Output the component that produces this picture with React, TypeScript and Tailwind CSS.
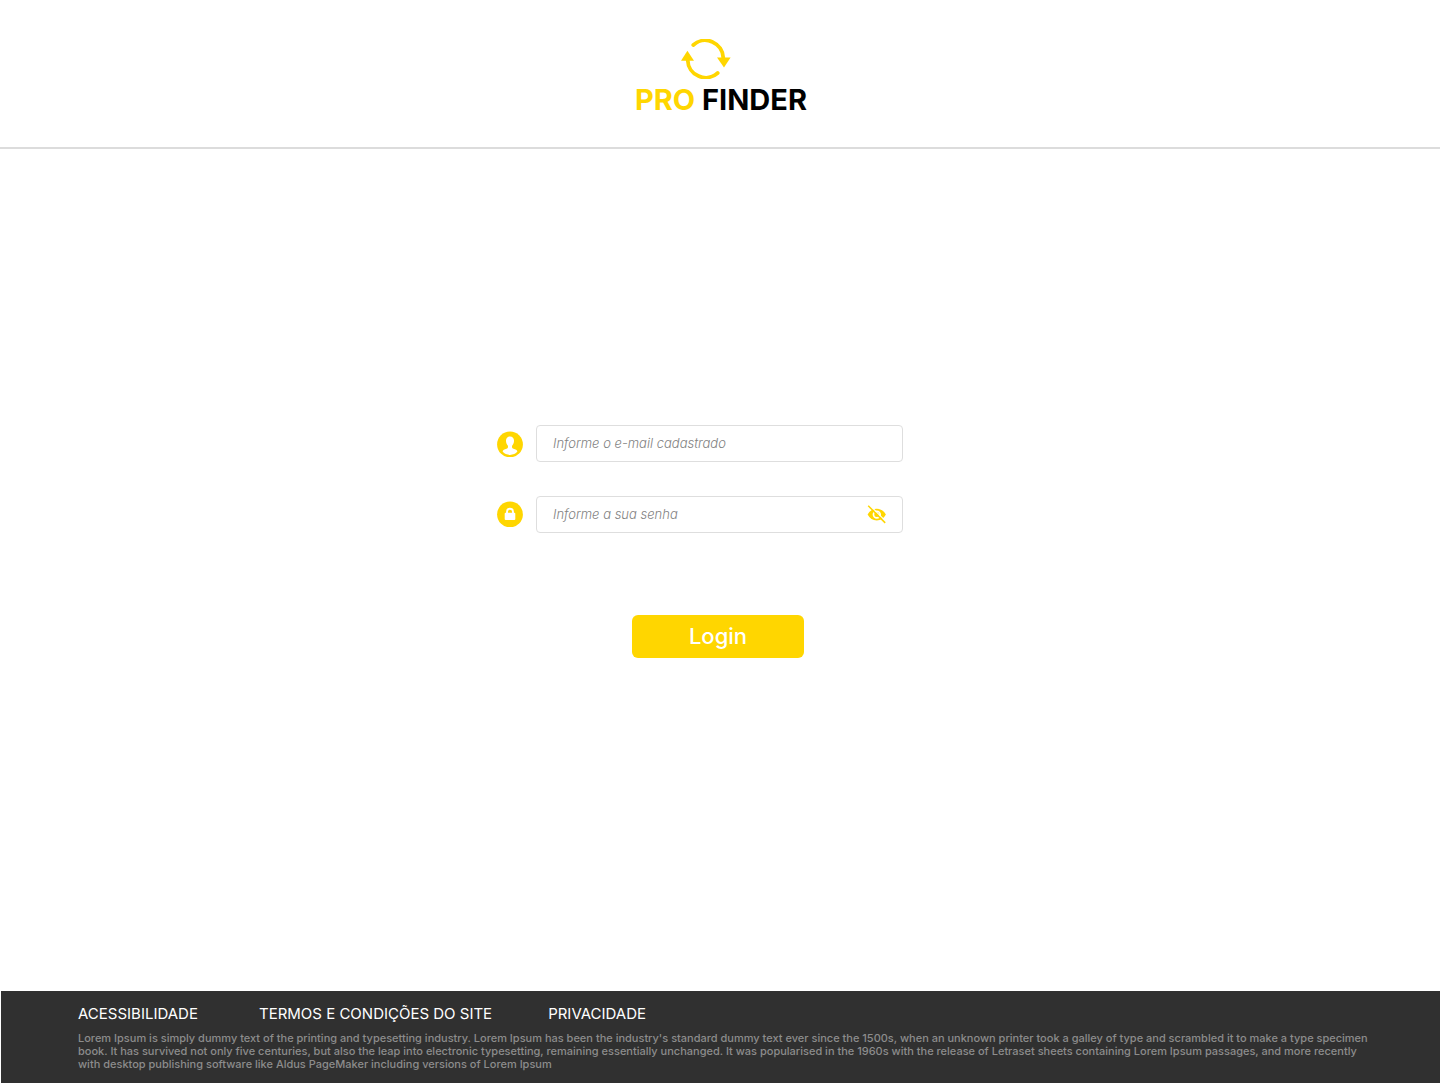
import { useState } from 'react';

function CycleMark() {
  return (
    <svg className="h-10 w-[50px]" viewBox="0 0 50 40" fill="none" aria-hidden="true">
      <path d="M12.300 6A18 18 0 0 1 42.300 19" stroke="#ffd600" strokeWidth="3.800" strokeLinecap="round" />
      <path d="M36.700 34A18 18 0 0 1 6.700 21" stroke="#ffd600" strokeWidth="3.800" strokeLinecap="round" />
      <path d="M36 18.400H49.600L43 28.400Z" fill="#ffd600" />
      <path d="M0 21.800H13L6.400 11.800Z" fill="#ffd600" />
    </svg>
  );
}

function UserIcon() {
  return (
    <svg className="size-[26px]" viewBox="0 0 26 26" aria-hidden="true">
      <circle cx="13" cy="13.400" r="12.900" fill="#ffd600" />
      <path
        d="M13 5.6c2.7 0 4.200 1.900 4 4.500-.1 2-.9 3.700-1.900 4.700-.3 1.500.1 2.400 1.400 2.900 2 .7 3.700 1.200 3.900 2.900C18.800 22.700 16 23.900 13 23.900S7.200 22.700 5.600 20.600c.2-1.700 1.900-2.200 3.900-2.900 1.300-.5 1.700-1.400 1.400-2.900-1-1-1.800-2.700-1.900-4.700-.2-2.600 1.300-4.500 4-4.500Z"
        fill="#fff"
      />
    </svg>
  );
}

function LockIcon() {
  return (
    <svg className="size-[26px]" viewBox="0 0 26 26" aria-hidden="true">
      <circle cx="13" cy="13.400" r="12.900" fill="#ffd600" />
      <rect x="7.700" y="11.700" width="10.600" height="7.400" rx="1" fill="#fff" />
      <path d="M10 12.400v-1.700a3 3 0 0 1 6 0v1.700" fill="none" stroke="#fff" strokeWidth="1.900" />
    </svg>
  );
}

function EyeOffIcon() {
  return (
    <svg className="h-5 w-5" viewBox="0 0 20 20" fill="none" aria-hidden="true">
      <path
        fillRule="evenodd"
        d="M.6 10.600C2.600 6.800 5.900 4.700 9.800 4.700s7.100 2.100 9.100 5.900c-2 3.800-5.200 5.900-9.100 5.900S2.600 14.400.6 10.600Zm9.200-4.200a4.200 4.200 0 1 0 0 8.400 4.200 4.200 0 0 0 0-8.400Zm0 1.700a2.500 2.500 0 1 1 0 5 2.500 2.500 0 0 1 0-5Z"
        fill="#ffd600"
      />
      <path d="M2.700 1.200L19.300 17.800" stroke="#fff" strokeWidth="1.200" />
      <path d="M1.200 1.700L18.200 18.900" stroke="#ffd600" strokeWidth="1.500" />
    </svg>
  );
}

const inputClass =
  'h-[37px] w-full rounded border border-[#dedede] bg-white px-4 text-[13px] text-gray-800 outline-none placeholder:font-light placeholder:italic placeholder:text-[#828282] focus:border-[#ffd600]';

export default function App() {
  const [visible, setVisible] = useState(false);

  return (
    <div className="flex min-h-screen flex-col bg-white font-['Inter',sans-serif]">
      <header className="flex flex-col items-center border-b-2 border-[#dcdcdc] pt-[39px] pb-[26px]">
        <div className="mr-7">
          <CycleMark />
        </div>
        <h1 className="ml-0.5 text-[29px] leading-[42px] font-bold text-black">
          <span className="text-[#ffd600]">PRO</span> FINDER
        </h1>
      </header>

      <main className="flex flex-1 flex-col items-center justify-center px-4 pb-[58px]">
        <form className="flex w-full max-w-[446px] flex-col sm:pr-10" onSubmit={(e) => e.preventDefault()}>
          <div className="flex items-center gap-[13px]">
            <label htmlFor="email" aria-label="E-mail" className="mt-0.5 shrink-0">
              <UserIcon />
            </label>
            <input id="email" type="email" placeholder="Informe o e-mail cadastrado" className={inputClass} />
          </div>

          <div className="mt-[34px] flex items-center gap-[13px]">
            <label htmlFor="password" aria-label="Senha" className="shrink-0">
              <LockIcon />
            </label>
            <div className="relative flex-1">
              <input
                id="password"
                type={visible ? 'text' : 'password'}
                placeholder="Informe a sua senha"
                className={inputClass}
              />
              <button
                type="button"
                aria-label="Mostrar senha"
                onClick={() => setVisible(!visible)}
                className="absolute inset-y-0 right-4 flex cursor-pointer items-center"
              >
                <EyeOffIcon />
              </button>
            </div>
          </div>

          <button
            type="submit"
            className="mt-[82px] h-[43px] w-[172px] cursor-pointer self-center rounded-md bg-[#ffd600] text-[22px] font-medium text-white sm:ml-9"
          >
            Login
          </button>
        </form>
      </main>

      <footer className="ml-px bg-[#303030] px-[77px] pt-3 pb-3">
        <nav className="flex flex-wrap text-[15px] leading-[22px] text-white">
          <a href="#acessibilidade" className="mr-[61px]">ACESSIBILIDADE</a>
          <a href="#termos" className="mr-14">TERMOS E CONDIÇÕES DO SITE</a>
          <a href="#privacidade">PRIVACIDADE</a>
        </nav>
        <p className="mt-[7px] -mr-2 text-[11px] leading-[13px] font-medium text-[#8c8c8c]">
          Lorem Ipsum is simply dummy text of the printing and typesetting industry. Lorem Ipsum has been the
          industry's standard dummy text ever since the 1500s, when an unknown printer took a galley of type and
          scrambled it to make a type specimen book. It has survived not only five centuries, but also the leap into
          electronic typesetting, remaining essentially unchanged. It was popularised in the 1960s with the release of
          Letraset sheets containing Lorem Ipsum passages, and more recently with desktop publishing software like
          Aldus PageMaker including versions of Lorem Ipsum
        </p>
      </footer>
    </div>
  );
}
